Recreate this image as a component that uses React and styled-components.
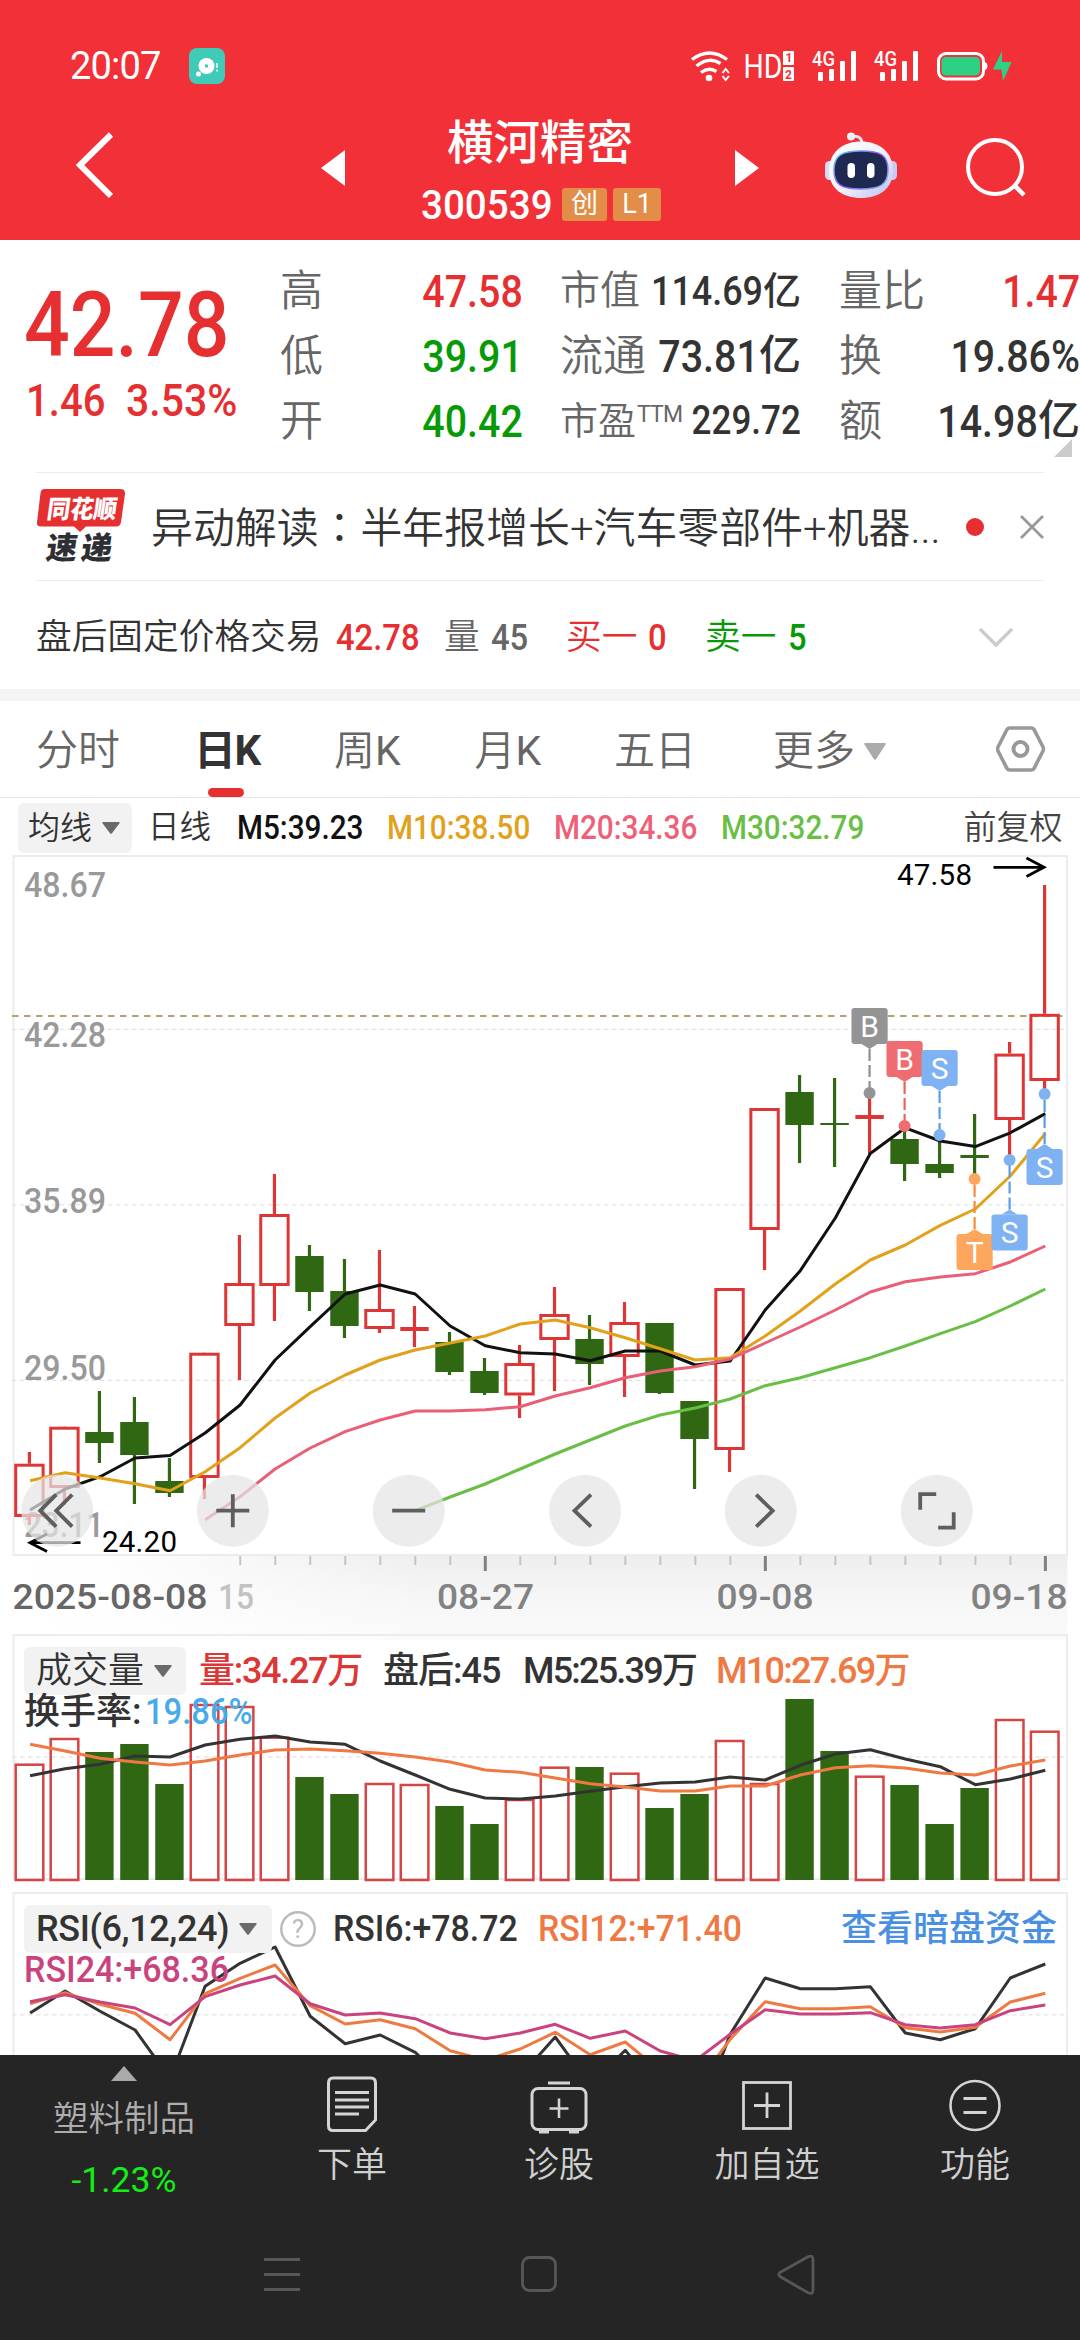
import React from "react";
import styled, { createGlobalStyle } from "styled-components";

const RED = "#e62f31";
const GREEN = "#079a07";
const CANDLE_RED = "#dd3636";
const CANDLE_GREEN = "#2f6712";
const FONT = `Roboto, "Noto Sans CJK SC", sans-serif`;

const Global = createGlobalStyle`
  * { box-sizing: border-box; }
  body { margin: 0; background: #fff; font-family: ${FONT}; }
  svg { display: block; flex: none; }
`;

const Screen = styled.main`
  width: 1080px;
  height: 2340px;
  display: flex;
  flex-direction: column;
  background: #fff;
  overflow: hidden;
`;

/* shared text atom */
const Txt = styled.span`
  display: block;
  flex: none;
  margin: ${(p) => p.$m || 0};
  white-space: nowrap;
  line-height: 1;
  font-size: ${(p) => p.$s || 36}px;
  font-weight: ${(p) => p.$b || 350};
  color: ${(p) => p.$c || "#333"};
  letter-spacing: ${(p) => p.$ls || 0}px;
  width: ${(p) => (p.$w ? `${p.$w}px` : "auto")};
`;

/* condensed figures used for quotes */
const Num = styled(Txt)`
  font-weight: 500;
  transform: scaleX(${(p) => p.$sx || 0.875});
  transform-origin: ${(p) => (p.$right ? "right" : "left")} center;
`;

const Latin = styled.span`
  font-weight: 400;
`;

/* header */
const Header = styled.header`
  height: 240px;
  flex: none;
  background: #f23038;
  display: flex;
  flex-direction: column;
  color: #fff;
`;
const StatusBar = styled.div`
  height: 120px;
  padding: 12px 67px 0 70px;
  display: flex;
  align-items: center;
`;
const StatusIcons = styled.div`
  margin-left: auto;
  display: flex;
  align-items: center;
`;
const BadgeSlot = styled.div`
  margin-left: 28px;
`;
const TitleBar = styled.div`
  height: 120px;
  display: grid;
  grid-template-columns: 321px 100px 238px 100px 66px 138px 1fr;
  align-items: start;
`;
const IconSlot = styled.div`
  padding: ${(p) => p.$p};
`;
const TitleBlock = styled.div`
  display: flex;
  flex-direction: column;
  align-items: center;
`;
const CodeLine = styled.div`
  display: flex;
  align-items: center;
  gap: 6px;
  margin: 17px 0 0 2px;
`;
const Tag = styled.span`
  display: flex;
  align-items: center;
  justify-content: center;
  width: ${(p) => p.$w}px;
  height: 33px;
  border-radius: 3px;
  background: #e28d48;
  font-size: 27px;
  line-height: 1;
`;

/* quote */
const Quote = styled.section`
  position: relative;
  height: 232px;
  flex: none;
  display: grid;
  grid-template-columns: 280px 243px 37px 241px 38px 241px;
`;
const PriceBlock = styled.div`
  padding: 40px 0 0 24px;
`;
const ChangeLine = styled.div`
  display: flex;
  padding-left: 2px;
  margin-top: 7px;
`;
const StatColumn = styled.dl`
  margin: 0;
  min-width: 0;
  padding-top: 18.5px;
  grid-column: ${(p) => p.$col};
`;
const StatRow = styled.div`
  height: 65.2px;
  display: flex;
  align-items: center;
`;
const StatValue = styled.dd`
  margin: 0;
  flex: 1;
  min-width: 0;
  display: flex;
  align-items: center;
  justify-content: flex-end;
`;
const Sup = styled.sup`
  font-size: 23px;
  font-weight: 400;
  line-height: 1;
  margin-left: 1px;
  vertical-align: 12px;
  letter-spacing: -0.8px;
`;
const Corner = styled.i`
  position: absolute;
  right: 8px;
  bottom: 15px;
  border-left: 18px solid transparent;
  border-bottom: 18px solid #ccc;
`;

const NewsRow = styled.section`
  height: 109px;
  flex: none;
  margin: 0 36px;
  border-top: 1px solid #ebebeb;
  border-bottom: 1px solid #ebebeb;
  display: flex;
  align-items: center;
`;
const Brand = styled.div`
  width: 115px;
`;
const CenteredColon = styled.span`
  font-family: "Noto Sans CJK TC", sans-serif;
`;
const Dot = styled.i`
  width: 18px;
  height: 18px;
  border-radius: 50%;
  background: ${RED};
  margin: 0 36px 0 auto;
`;

const TradeRow = styled.section`
  height: 108px;
  flex: none;
  padding: 5px 66px 0 36px;
  display: flex;
  align-items: center;
`;
const Trailing = styled.div`
  margin-left: auto;
`;
const Band = styled.div`
  height: 12px;
  flex: none;
  background: #f4f4f4;
`;

const Tabs = styled.nav`
  height: 97px;
  flex: none;
  border-bottom: 1px solid #e6e6e6;
  padding: 0 36px;
  display: grid;
  grid-template-columns: 158px 140px 140.5px 139.5px 159px 223px 1fr;
`;
const Tab = styled.div`
  display: flex;
  flex-direction: column;
  align-items: flex-start;
  padding-top: 29px;
`;
const TabLabel = styled.div`
  display: flex;
  align-items: center;
  gap: 9px;
  height: 42px;
`;
const Indicator = styled.i`
  width: 36px;
  height: 9px;
  border-radius: 5px;
  background: ${RED};
  margin: 16px 0 0 14px;
`;
const TabTool = styled.div`
  display: flex;
  justify-content: flex-end;
  padding-top: 25px;
`;

const MaRow = styled.section`
  height: 57px;
  flex: none;
  padding: 2px 18px 0;
  display: flex;
  align-items: center;
`;
const Pill = styled.div`
  flex: none;
  width: ${(p) => p.$w}px;
  height: ${(p) => p.$h || 48}px;
  padding: 0 0 0 ${(p) => p.$pad || 12}px;
  margin-right: ${(p) => p.$mr || 0}px;
  border-radius: 6px;
  background: #f2f2f2;
  display: flex;
  align-items: center;
  gap: 10px;
`;

const Charts = styled.section`
  position: relative;
  height: 1200px;
  flex: none;
  overflow: hidden;
`;
const Legend = styled.div`
  position: absolute;
  left: 24px;
  top: ${(p) => p.$top}px;
  width: 1035px;
  height: ${(p) => p.$h || 48}px;
  display: flex;
  align-items: center;
`;
const Help = styled.div`
  margin-right: 17px;
`;

/* bottom */
const Dock = styled.footer`
  height: 285px;
  flex: none;
  background: #252525;
  display: flex;
  flex-direction: column;
`;
const Actions = styled.div`
  height: 170px;
  display: grid;
  grid-template-columns: 248px 208px 206px 210px 206px;
`;
const Action = styled.div`
  display: flex;
  flex-direction: column;
  align-items: center;
  padding-top: ${(p) => p.$pt || 20}px;
  gap: ${(p) => p.$gap || 0}px;
`;
const SystemNav = styled.div`
  height: 115px;
  padding: 30px 265px 0 263px;
  display: flex;
  justify-content: space-between;
  align-items: flex-start;
`;

/* ---- icons ---- */
const Down = ({ w = 18, h = 12, c = "#6a6a6a" }) => (
  <svg width={w} height={h} viewBox="0 0 18 12" preserveAspectRatio="none"><path d="M1 0H17Q18.4 0 17.5 1.2L10 11.3Q9 12.4 8 11.3L.5 1.2Q-.4 0 1 0Z" fill={c} /></svg>
);

const AppBadge = () => (
  <svg width="36" height="36" viewBox="0 0 36 36">
    <rect width="36" height="36" rx="8" fill="#40cbb8" />
    <circle cx="17.5" cy="18" r="8" fill="#fff" />
    <rect x="16" y="16.5" width="3" height="3" fill="#40cbb8" />
    <circle cx="9.5" cy="26" r="2.5" fill="#fff" />
    <path d="M28 15v5M28 21.5v2" stroke="#d8f6f1" strokeWidth="1.8" />
  </svg>
);

const StatusGlyphs = () => (
  <svg width="324" height="60" viewBox="688 36 324 60">
    <g fill="none" stroke="#fff" strokeWidth="3.4">
      <path d="M691 59.5Q708.500 46.500 726 59.500" />
      <path d="M695.500 66Q708.500 56 719.500 63.500" />
      <path d="M700 72.500Q708 66.500 715.500 71.500" />
    </g>
    <circle cx="708" cy="78" r="3.300" fill="#fff" />
    <path d="M721.500 73l3.200-4 3.200 4M721.500 76l3.200 4 3.200-4" fill="none" stroke="#fff" strokeWidth="2" />
    <text x="742.500" y="78" fontSize="33.500" fill="#fff" textLength="39" lengthAdjust="spacingAndGlyphs">HD</text>
    <rect x="782" y="51" width="11" height="14" rx="1" fill="#fff" />
    <rect x="782" y="67" width="11" height="14" rx="1" fill="#fff" />
    <text x="784.500" y="62.200" fontSize="12" fontWeight="700" fill="#f23038">1</text>
    <text x="784" y="78.800" fontSize="12" fontWeight="700" fill="#f23038">2</text>
    {[0, 62].map((dx) => (
      <g key={dx} fill="#fff" transform={`translate(${dx} 0)`}>
        <text x="811" y="65.500" fontSize="20" fontWeight="500" textLength="23" lengthAdjust="spacingAndGlyphs">4G</text>
        <rect x="817" y="72" width="5" height="9" rx="1" />
        <rect x="828" y="69" width="5" height="12" rx="1" />
        <rect x="839" y="61" width="5" height="20" rx="1" />
        <rect x="850" y="51" width="5" height="30" rx="1" />
      </g>
    ))}
    <rect x="937.500" y="53.500" width="45" height="25.500" rx="7.500" fill="none" stroke="#fff" strokeWidth="3" />
    <path d="M984 62q2.500 1 2.500 4t-2.500 4z" fill="#fff" />
    <rect x="940.500" y="57" width="38.500" height="18.500" rx="4.500" fill="#2dd184" />
    <path d="M1001 51L992 69.500H1000.500L1002 81L1010.500 62H1001Z" fill="#2dd184" />
  </svg>
);

const Robot = () => (
  <svg width="72" height="68" viewBox="0 0 72 68">
    <defs>
      <linearGradient id="shell" x1="0" y1="0" x2="1" y2="1">
        <stop offset="0" stopColor="#fff" /><stop offset=".55" stopColor="#eef0fb" /><stop offset="1" stopColor="#b9bcec" />
      </linearGradient>
      <linearGradient id="rim" x1="0" y1="0" x2="1" y2="1">
        <stop offset="0" stopColor="#5fd8f5" /><stop offset=".5" stopColor="#8c4bf0" /><stop offset="1" stopColor="#7ac8f5" />
      </linearGradient>
    </defs>
    <path d="M27 4.500Q37 3 37 12" fill="none" stroke="#e4e6f6" strokeWidth="3" />
    <circle cx="26" cy="4.500" r="4" fill="#eceefa" />
    <rect x="0" y="29" width="9" height="19" rx="4.500" fill="#d9dcf5" />
    <rect x="63" y="29" width="9" height="19" rx="4.500" fill="#c9ccf0" />
    <path d="M36 9.500C54 9.500 68 20 68 38.500 68 57 54 66 36 66S4 57 4 38.500C4 20 18 9.500 36 9.500Z" fill="url(#shell)" />
    <path d="M36 19C55 19 63 23 63 38S55 57 36 57 9 53 9 38 17 19 36 19Z" fill="#1e2850" stroke="url(#rim)" strokeWidth="1.500" />
    <rect x="22.500" y="31" width="7.500" height="15" rx="3.700" fill="#fff" />
    <rect x="42" y="31" width="7.500" height="15" rx="3.700" fill="#fff" />
  </svg>
);

const Logo = () => (
  <svg width="90" height="92" viewBox="0 -8 90 92">
    <path d="M8.500 0H84Q89.500 0 89 5L85 33Q84.300 37.500 80 37.500H50L44 43 38 37.500H5Q.500 37.500 1 33.500L4.500 4Q5 0 8.500 0Z" fill="#e62f31" />
    <g transform="skewX(-8)">
      <text x="14" y="29" fontSize="25" fontWeight="900" fill="#fff" textLength="70" lengthAdjust="spacingAndGlyphs">同花顺</text>
      <text x="19" y="70.500" fontSize="31" fontWeight="900" fill="#2d2f33" textLength="66" lengthAdjust="spacing">速递</text>
    </g>
  </svg>
);

/* ---- chart data ---- */
const X0 = 29.4;
const STEP = 35.007;
const cx = (i) => X0 + STEP * i;

/* [up, high, bodyTop, bodyBottom, low] */
const candles = [
  [1, 1452, 1463.7, 1517, 1525], [1, 1427, 1426.7, 1488, 1505], [0, 1391, 1432, 1443, 1463],
  [0, 1397, 1422, 1455, 1504], [0, 1458, 1481, 1493, 1497], [1, 1353, 1352.7, 1478, 1499],
  [1, 1235, 1283, 1326, 1380], [1, 1174, 1214, 1286, 1321], [0, 1245, 1256, 1292, 1311],
  [0, 1259, 1291, 1326, 1338], [1, 1250, 1309, 1329, 1333], [1, 1306, 1327, 1331, 1347],
  [0, 1332, 1342, 1372, 1375], [0, 1358, 1371, 1393, 1395], [1, 1345, 1363, 1395.5, 1418],
  [1, 1287, 1314, 1340, 1391], [0, 1315, 1339, 1364, 1385], [1, 1302, 1322, 1357, 1397],
  [0, 1323, 1323, 1393, 1394], [0, 1401, 1401, 1439, 1489], [1, 1288, 1288, 1450, 1472],
  [1, 1108, 1108, 1230, 1270], [0, 1075, 1092, 1125, 1163], [0, 1078, 1123, 1125, 1167],
  [1, 1093, 1115, 1119, 1154], [0, 1130, 1139, 1164, 1181], [0, 1135, 1164, 1173, 1178],
  [0, 1114, 1155, 1158, 1179], [1, 1042, 1053.6, 1120, 1159], [1, 885, 1013.8, 1081, 1094],
];

const ma5 = [1510, 1489, 1476.7, 1458, 1455.5, 1433, 1405, 1360, 1326.7, 1294, 1285, 1294, 1326, 1345.7, 1352.7, 1354, 1360.7, 1351, 1351, 1365, 1361, 1310, 1270.7, 1218, 1153.5, 1127.8, 1141, 1146.6, 1132.8, 1113.6];
const ma10 = [1480.7, 1472.7, 1478, 1483.7, 1490.7, 1471.7, 1447.7, 1418, 1393, 1375, 1360, 1350, 1343, 1336, 1324, 1320, 1327.7, 1337.7, 1348.7, 1360, 1357.7, 1336, 1311, 1284, 1260, 1245, 1225.4, 1209, 1176, 1133.5];
const ma20 = [1519.7, 1496.7, 1469, 1448, 1431.7, 1420, 1411, 1411, 1409.7, 1406.7, 1396, 1387.7, 1377.7, 1371, 1366.7, 1359, 1343, 1327, 1310, 1292, 1281.7, 1277, 1273.7, 1262, 1246];
const ma30 = [1510.7, 1497, 1484, 1469, 1454, 1440, 1426, 1415, 1408, 1399, 1385.7, 1377.7, 1367.7, 1357.7, 1346, 1333.7, 1321.7, 1306, 1289];

const volTop = [1763.7, 1738, 1752, 1744, 1784, 1704, 1706, 1736.7, 1777, 1794, 1783, 1784, 1806, 1824, 1799, 1766.7, 1767, 1772.7, 1808, 1794, 1740, 1783, 1699, 1751, 1775.7, 1785, 1824, 1788, 1719, 1730.7];

/* sub-chart series, in thirds of a pixel below 1620 */
const sub = (list) => list.map((v) => 1620 + v / 3);
const vol5 = sub([467, 446, 433, 408, 411, 375, 358, 348, 366, 373, 423, 465, 508, 534, 537, 528, 514, 500, 489, 486, 471, 480, 436, 402, 389, 417, 440, 494, 477, 451]);
const vol10 = sub([373, 393, 415, 426, 435, 423, 405, 390, 387, 392, 400, 411, 426, 450, 457, 474, 491, 501, 513, 513, 498, 498, 465, 443, 437, 444, 459, 465, 438, 420]);
const rsi6 = sub([1179, 1113, 1174, 1230, 1376, 1099, 1030, 981, 1189, 1271, 1245, 1297, 1400, 1450, 1369, 1251, 1395, 1291, 1416, 1520, 1243, 1074, 1106, 1106, 1100, 1239, 1259, 1226, 1074, 1032]);
const rsi12 = sub([1151, 1118, 1153, 1180, 1259, 1121, 1075, 1035, 1157, 1212, 1199, 1226, 1292, 1320, 1287, 1237, 1304, 1266, 1352, 1400, 1258, 1145, 1166, 1166, 1160, 1223, 1236, 1222, 1146, 1120]);
const rsi24 = sub([1145, 1124, 1146, 1164, 1214, 1130, 1095, 1068, 1151, 1185, 1179, 1196, 1239, 1256, 1239, 1213, 1255, 1233, 1293, 1322, 1243, 1169, 1182, 1182, 1178, 1214, 1224, 1214, 1172, 1155]);

const Line = ({ data, from = 0, c, w = 3 }) => (
  <polyline fill="none" stroke={c} strokeWidth={w} strokeLinejoin="round" points={data.map((y, k) => `${(cx(from + k) + 0.7).toFixed(1)},${y.toFixed(1)}`).join(" ")} />
);

const Candle = ({ i, d: [up, hi, top, bot, lo] }) => {
  const x = cx(i);
  const c = up ? CANDLE_RED : CANDLE_GREEN;
  const hollow = up && bot - top > 8;
  return (
    <g>
      <path d={`M${x} ${hi}V${top}M${x} ${bot}V${lo}`} stroke={c} strokeWidth="3.2" />
      {hollow
        ? <rect x={x - 13.7} y={top + 1.5} width="27.400" height={bot - top - 3} fill="none" stroke={c} strokeWidth="3" />
        : <rect x={x - 14.2} y={top} width="28.400" height={bot - top} fill={c} />}
    </g>
  );
};

const markers = [
  { i: 24, t: "B", top: 1008, dot: 1093, c: "#8f8f8f", f: "#949494" },
  { i: 25, t: "B", top: 1041, dot: 1126, c: "#e96065", f: "#ef6d71" },
  { i: 26, t: "S", top: 1050, dot: 1135, c: "#5a9ce8", f: "#7fb2f2" },
  { i: 27, t: "T", top: 1234, dot: 1179, c: "#f58b3a", f: "#fda65e" },
  { i: 28, t: "S", top: 1214.5, dot: 1160, c: "#5a9ce8", f: "#7fb2f2" },
  { i: 29, t: "S", top: 1149, dot: 1094, c: "#5a9ce8", f: "#7fb2f2" },
];

const Marker = ({ m }) => {
  const x = cx(m.i);
  const above = m.top < m.dot;
  const edge = above ? m.top + 36 : m.top;
  const tip = above ? edge + 5 : edge - 5;
  return (
    <g>
      <path d={`M${x} ${tip}V${m.dot}`} stroke={m.c} strokeWidth="2.2" strokeDasharray="12 4" />
      <circle cx={x} cy={m.dot} r="6" fill={m.f} />
      <rect x={x - 18.1} y={m.top} width="36.200" height="36" rx="3" fill={m.f} />
      <path d={`M${x - 8} ${edge}L${x} ${tip}L${x + 8} ${edge}Z`} fill={m.f} />
      <text x={x} y={m.top + 28.7} fontSize="30" fill="#fff" textAnchor="middle">{m.t}</text>
    </g>
  );
};

const AxisText = ({ x, y, w, c = "#999", children }) => (
  <text x={x} y={y} fontSize="35" fontWeight="500" fill={c} textLength={w} lengthAdjust="spacingAndGlyphs">{children}</text>
);

const tools = [
  [57.2, "M-1 -16L-17 0L-1 16M15 -16L-1 0L15 16"],
  [232.8, "M0 -16.500V16.500M-16.500 0H16.500"],
  [408.7, "M-16.500 0H16.500"],
  [585, "M6 -16L-10.500 0L6 16"],
  [760.7, "M-4.500 -16L12 0L-4.500 16"],
  [936.7, "M-16.500 -1V-16.500H-.500M17 1.500V17H1.500"],
];

const ChartDrawing = () => (
  <svg width="1080" height="1200" viewBox="0 855 1080 1200">
    <defs>
      <linearGradient id="axisFade" x1="0" y1="0" x2="0" y2="1">
        <stop offset="0" stopColor="#eeeeee" /><stop offset=".5" stopColor="#f6f6f6" /><stop offset="1" stopColor="#fbfbfb" />
      </linearGradient>
      <linearGradient id="leftFade" x1="0" y1="0" x2="1" y2="0">
        <stop offset="0" stopColor="#fff" /><stop offset=".25" stopColor="#fff" stopOpacity=".9" /><stop offset="1" stopColor="#fff" stopOpacity="0" />
      </linearGradient>
    </defs>

    <rect x="14" y="1556" width="1053.500" height="84" fill="url(#axisFade)" />
    <rect x="12" y="1556" width="420" height="84" fill="url(#leftFade)" />

    <path d="M13.500 855V1555H1067V855M12.500 856H1068" fill="none" stroke="#ececec" strokeWidth="2" />
    <path d="M13.500 1635V1879H1067V1635M12.500 1635H1068" fill="none" stroke="#ececec" strokeWidth="2" />
    <path d="M13.500 2060V1893H1067V2060" fill="none" stroke="#ececec" strokeWidth="2" />
    <path d="M12 1029.300H1066M12 1380.300H1066" stroke="#dcdcdc" strokeWidth="1" strokeDasharray="4.500 3.500" />
    <path d="M12 1204.800H1066M12 1757H1066M12 2014.700H1066" stroke="#ececec" strokeWidth="2" strokeDasharray="4.500 3.500" />
    <path d="M12 1016H1063" stroke="#b5a272" strokeWidth="2" strokeDasharray="6.500 5.500" />

    <AxisText x="24" y="897" w="82">48.67</AxisText>
    <AxisText x="24" y="1047" w="82">42.28</AxisText>
    <AxisText x="24" y="1213" w="82">35.89</AxisText>
    <AxisText x="24" y="1380" w="82">29.50</AxisText>
    <AxisText x="24" y="1537" w="80">23.11</AxisText>

    {candles.map((d, i) => <Candle key={i} i={i} d={d} />)}
    <Line data={ma5} c="#111" />
    <Line data={ma10} c="#e2a11a" />
    <Line data={ma20} from={5} c="#ea5f77" />
    <Line data={ma30} from={11} c="#69bf45" />
    {markers.map((m) => <Marker key={m.i} m={m} />)}

    <text x="897" y="885" fontSize="29.500" fill="#000" textLength="75">47.58</text>
    <path d="M993.500 867.300H1044M1026.500 858L1044 867.300L1026.500 876.500" fill="none" stroke="#000" strokeWidth="2.800" />
    <text x="102" y="1551.700" fontSize="29.500" fill="#000" textLength="75">24.20</text>
    <path d="M80.500 1542.700H30M47 1534L30 1542.700L47 1551.500" fill="none" stroke="#000" strokeWidth="2.800" />

    {tools.map(([x, d]) => (
      <g key={x} transform={`translate(${x} 1510.700)`}>
        <circle r="36" fill="#e4e4e4" opacity=".72" />
        <path d={d} fill="none" stroke="#5e5e5e" strokeWidth="3.800" />
      </g>
    ))}

    {candles.map((_, i) => {
      if (i < 6) return null;
      const major = i % 8 === 5;
      return <path key={i} d={`M${cx(i) + 0.8} 1556V${major ? 1571 : 1565}`} stroke={major ? "#808080" : "#c4c4c4"} strokeWidth={major ? 3 : 2} />;
    })}
    <AxisText x="12.500" y="1609" w="195" c="#666">2025-08-08</AxisText>
    <AxisText x="218" y="1609" w="36" c="#c2c2c2">15</AxisText>
    <AxisText x="437" y="1609" w="97" c="#828282">08-27</AxisText>
    <AxisText x="716.500" y="1609" w="97" c="#828282">09-08</AxisText>
    <AxisText x="970.500" y="1609" w="97" c="#828282">09-18</AxisText>

    {volTop.map((y, i) => candles[i][0]
      ? <rect key={i} x={cx(i) - 13.7} y={y + 1} width="27.600" height={1879 - y} fill="none" stroke="#d64444" strokeWidth="2.500" />
      : <rect key={i} x={cx(i) - 14.2} y={y} width="28.400" height={1880 - y} fill={CANDLE_GREEN} />)}
    <Line data={vol5} c="#333" />
    <Line data={vol10} c="#f07843" />

    <Line data={rsi6} c="#333" />
    <Line data={rsi12} c="#ee7a42" />
    <Line data={rsi24} c="#c9447e" />
  </svg>
);

/* [label, label size, figure, unit, figure size, colour] */
const statCols = [
  { col: 2, rows: [["高", 43, "47.58", "", 45, RED], ["低", 43, "39.91", "", 45, GREEN], ["开", 43, "40.42", "", 45, GREEN]] },
  { col: 4, rows: [["市值", 40, "114.69", "亿", 41], ["流通", 43, "73.81", "亿", 45], ["市盈", 38, "229.72", "", 40]] },
  { col: 6, rows: [["量比", 43, "1.47", "", 45, RED], ["换", 43, "19.86%", "", 45], ["额", 43, "14.98", "亿", 45]] },
];

export default function App() {
  return (
    <Screen>
      <Global />
      <Header>
        <StatusBar>
          <Txt $s={38} $b={400} $c="#fff" $ls={-0.8}>20:07</Txt>
          <BadgeSlot><AppBadge /></BadgeSlot>
          <StatusIcons><StatusGlyphs /></StatusIcons>
        </StatusBar>
        <TitleBar>
          <IconSlot $p="11px 0 0 74px">
            <svg width="42" height="68" viewBox="0 0 42 68"><path d="M37 3.500L6 34L37 65" fill="none" stroke="#fff" strokeWidth="6" /></svg>
          </IconSlot>
          <IconSlot $p="30px 0 0 0">
            <svg width="24" height="36" viewBox="0 0 24 36"><path d="M24 0V36L0 18Z" fill="#fff" /></svg>
          </IconSlot>
          <TitleBlock>
            <Txt $s={46.5} $b={500} $c="#fff">横河精密</Txt>
            <CodeLine>
              <Num $s={41.5} $c="#fff" $sx={0.93} $w={135}>300539</Num>
              <Tag $w={45}>创</Tag>
              <Tag $w={48}>L1</Tag>
            </CodeLine>
          </TitleBlock>
          <IconSlot $p="30px 0 0 76px">
            <svg width="24" height="36" viewBox="0 0 24 36"><path d="M0 0V36L24 18Z" fill="#fff" /></svg>
          </IconSlot>
          <IconSlot $p="12px 0 0 66px"><Robot /></IconSlot>
          <IconSlot $p="16px 0 0 140px">
            <svg width="62" height="64" viewBox="0 0 62 64"><circle cx="30" cy="31" r="27" fill="none" stroke="#fff" strokeWidth="4" /><path d="M48.500 48.500L59 59" stroke="#fff" strokeWidth="4.500" /></svg>
          </IconSlot>
        </TitleBar>
      </Header>

      <Quote>
        <PriceBlock>
          <Num $s={91} $c={RED} $sx={0.885}>42.78</Num>
          <ChangeLine>
            <Num $s={45} $c={RED} $sx={0.89} $w={100}>1.46</Num>
            <Num $s={45} $c={RED} $sx={0.91}>3.53%</Num>
          </ChangeLine>
        </PriceBlock>
        {statCols.map(({ col, rows }) => (
          <StatColumn key={col} $col={col}>
            {rows.map(([k, ks, v, unit, vs, c]) => (
              <StatRow key={k}>
                <Txt as="dt" $s={ks} $c="#666">{k}{k === "市盈" && <Sup>TTM</Sup>}</Txt>
                <StatValue>
                  <Num $s={vs} $c={c} $right>{v}</Num>
                  {unit && <Txt $s={vs - 3} $b={500}>{unit}</Txt>}
                </StatValue>
              </StatRow>
            ))}
          </StatColumn>
        ))}
        <Corner />
      </Quote>

      <NewsRow>
        <Brand><Logo /></Brand>
        <Txt $s={41.9}>异动解读<CenteredColon>：</CenteredColon>半年报增长+汽车零部件+机器...</Txt>
        <Dot />
        <svg width="24" height="24" viewBox="0 0 24 24"><path d="M1 1L23 23M23 1L1 23" stroke="#999" strokeWidth="2.800" /></svg>
      </NewsRow>

      <TradeRow>
        <Txt $s={35.7} $w={300}>盘后固定价格交易</Txt>
        <Num $s={36} $c={RED} $sx={0.91} $w={108}>42.78</Num>
        <Txt $s={35.7} $c="#666" $w={47}>量</Txt>
        <Num $s={36} $c="#666" $sx={0.91} $w={75}>45</Num>
        <Txt $s={35.7} $c={RED} $w={82}>买一</Txt>
        <Num $s={36} $c={RED} $sx={0.91} $w={57}>0</Num>
        <Txt $s={35.7} $c={GREEN} $w={83}>卖一</Txt>
        <Num $s={36} $c={GREEN} $sx={0.91}>5</Num>
        <Trailing>
          <svg width="36" height="22" viewBox="0 0 36 22"><path d="M2 2L18 18L34 2" fill="none" stroke="#ccc" strokeWidth="3.400" /></svg>
        </Trailing>
      </TradeRow>
      <Band />

      <Tabs>
        <Tab><TabLabel><Txt $s={42} $c="#666">分时</Txt></TabLabel></Tab>
        <Tab>
          <TabLabel><Txt $s={42} $b={700} $ls={-1.5}>日K</Txt></TabLabel>
          <Indicator />
        </Tab>
        <Tab><TabLabel><Txt $s={41} $c="#666">周<Latin>K</Latin></Txt></TabLabel></Tab>
        <Tab><TabLabel><Txt $s={41} $c="#666">月<Latin>K</Latin></Txt></TabLabel></Tab>
        <Tab><TabLabel><Txt $s={41} $c="#666">五日</Txt></TabLabel></Tab>
        <Tab><TabLabel><Txt $s={41} $c="#666">更多</Txt><Down w={22} h={17} c="#aaa" /></TabLabel></Tab>
        <TabTool>
          <svg width="49" height="46" viewBox="0 0 49 46">
            <path d="M13.500 2H35.500Q37 2 38 3.500L47 21Q48 23 47 25L38 42.500Q37 44 35.500 44H13.500Q12 44 11 42.500L2 25Q1 23 2 21L11 3.500Q12 2 13.500 2Z" fill="none" stroke="#999" strokeWidth="3.600" />
            <circle cx="24.500" cy="23" r="7" fill="none" stroke="#999" strokeWidth="4" />
          </svg>
        </TabTool>
      </Tabs>

      <MaRow>
        <Pill $w={114} $h={50} $pad={10} $mr={16}><Txt $s={32}>均线</Txt><Down /></Pill>
        <Txt $s={31.5} $w={89}>日线</Txt>
        <Num $s={33} $c="#111" $sx={0.9} $w={150}>M5:39.23</Num>
        <Num $s={33} $c="#e2a11a" $sx={0.9} $w={166.5}>M10:38.50</Num>
        <Num $s={33} $c="#ee6077" $sx={0.9} $w={167}>M20:34.36</Num>
        <Num $s={33} $c="#69bf45" $sx={0.9} $w={243}>M30:32.79</Num>
        <Txt $s={33} $c="#444">前复权</Txt>
      </MaRow>

      <Charts>
        <ChartDrawing />
        <Legend $top={792}>
          <Pill $w={162} $mr={13}><Txt $s={36}>成交量</Txt><Down /></Pill>
          <Txt $s={36} $b={500} $c={CANDLE_RED} $ls={-1.3} $w={184}>量:34.27万</Txt>
          <Txt $s={36} $b={500} $ls={-1} $w={140}>盘后:45</Txt>
          <Txt $s={36} $b={500} $ls={-1.8} $w={193}>M5:25.39万</Txt>
          <Txt $s={36} $b={500} $c="#f07843" $ls={-1.7}>M10:27.69万</Txt>
        </Legend>
        <Legend $top={839} $h={36}>
          <Txt $s={36} $b={500} $w={121}>换手率:</Txt>
          <Num $s={36} $c="#48aae8" $sx={0.91}>19.86%</Num>
        </Legend>
        <Legend $top={1050}>
          <Pill $w={248} $mr={8}><Txt $s={36} $b={500} $w={193} $ls={-0.4}>RSI(6,12,24)</Txt><Down /></Pill>
          <Help>
            <svg width="36" height="36" viewBox="0 0 36 36">
              <circle cx="18" cy="18" r="16.700" fill="none" stroke="#bbb" strokeWidth="2.500" />
              <text x="18" y="27" fontSize="26" fill="#bbb" textAnchor="middle">?</text>
            </svg>
          </Help>
          <Num $s={36} $sx={0.94} $w={205}>RSI6:+78.72</Num>
          <Num $s={36} $c="#f07843" $sx={0.94} $w={303}>RSI12:+71.40</Num>
          <Txt $s={36} $b={500} $c="#4a90e2">查看暗盘资金</Txt>
        </Legend>
        <Legend $top={1097} $h={36}>
          <Num $s={36} $c="#c9447e" $sx={0.945}>RSI24:+68.36</Num>
        </Legend>
      </Charts>

      <Dock>
        <Actions>
          <Action $pt={11}>
            <svg width="26" height="15" viewBox="0 0 26 15"><path d="M13 0L26 15H0Z" fill="#aaa" /></svg>
            <Txt $s={35.5} $c="#adadad" $m="21px 0 0">塑料制品</Txt>
            <Txt $s={35.5} $b={400} $c="#14ee14" $m="25px 0 0">-1.23%</Txt>
          </Action>
          <Action $gap={13}>
            <svg width="60" height="60" viewBox="0 0 60 60">
              <path d="M11 3H49Q53.500 3 53.500 8V45L43.500 55.500H11Q6.500 55.500 6.500 51V8Q6.500 3 11 3Z" fill="none" stroke="#d4d4d4" strokeWidth="3" />
              <path d="M13 17.500H47M13 25H47M13 32H47M13 39H37" stroke="#d4d4d4" strokeWidth="2.800" />
            </svg>
            <Txt $s={35} $c="#d0d0d0">下单</Txt>
          </Action>
          <Action $gap={13}>
            <svg width="60" height="60" viewBox="0 0 60 60">
              <rect x="3" y="13.500" width="54" height="41" rx="6" fill="none" stroke="#d4d4d4" strokeWidth="3" />
              <path d="M19 8H41M10 57H20M40 57H50" stroke="#d4d4d4" strokeWidth="3.200" />
              <path d="M30 23.500V43M20.500 33.500H39.500" stroke="#d4d4d4" strokeWidth="2.600" />
            </svg>
            <Txt $s={35} $c="#d0d0d0">诊股</Txt>
          </Action>
          <Action $gap={13}>
            <svg width="60" height="60" viewBox="0 0 60 60">
              <rect x="6.500" y="7.500" width="47" height="46" fill="none" stroke="#d4d4d4" strokeWidth="2.800" />
              <path d="M30 17.500V43M17 30.500H43" stroke="#d4d4d4" strokeWidth="2.800" />
            </svg>
            <Txt $s={35} $c="#d0d0d0">加自选</Txt>
          </Action>
          <Action $gap={13}>
            <svg width="60" height="60" viewBox="0 0 60 60">
              <circle cx="30" cy="30.500" r="24.500" fill="none" stroke="#d4d4d4" strokeWidth="2.600" />
              <path d="M18.500 23.500H41.500M18.500 37.500H41.500" stroke="#d4d4d4" strokeWidth="2.800" />
            </svg>
            <Txt $s={35} $c="#d0d0d0">功能</Txt>
          </Action>
        </Actions>
        <SystemNav>
          <svg width="38" height="40" viewBox="0 0 38 40"><path d="M1 4.500H37M1 19.500H37M1 34.500H37" stroke="#575757" strokeWidth="3" /></svg>
          <svg width="38" height="40" viewBox="0 0 38 40"><rect x="2.500" y="2.500" width="33" height="33" rx="7" fill="none" stroke="#575757" strokeWidth="2.800" /></svg>
          <svg width="38" height="42" viewBox="0 0 38 42"><path d="M31.500 1.500L3 17.500Q.500 19.500 3 21.500L31.500 38Q36 39.500 36 35V4.500Q36 0 31.500 1.500Z" fill="none" stroke="#575757" strokeWidth="2.800" /></svg>
        </SystemNav>
      </Dock>
    </Screen>
  );
}
